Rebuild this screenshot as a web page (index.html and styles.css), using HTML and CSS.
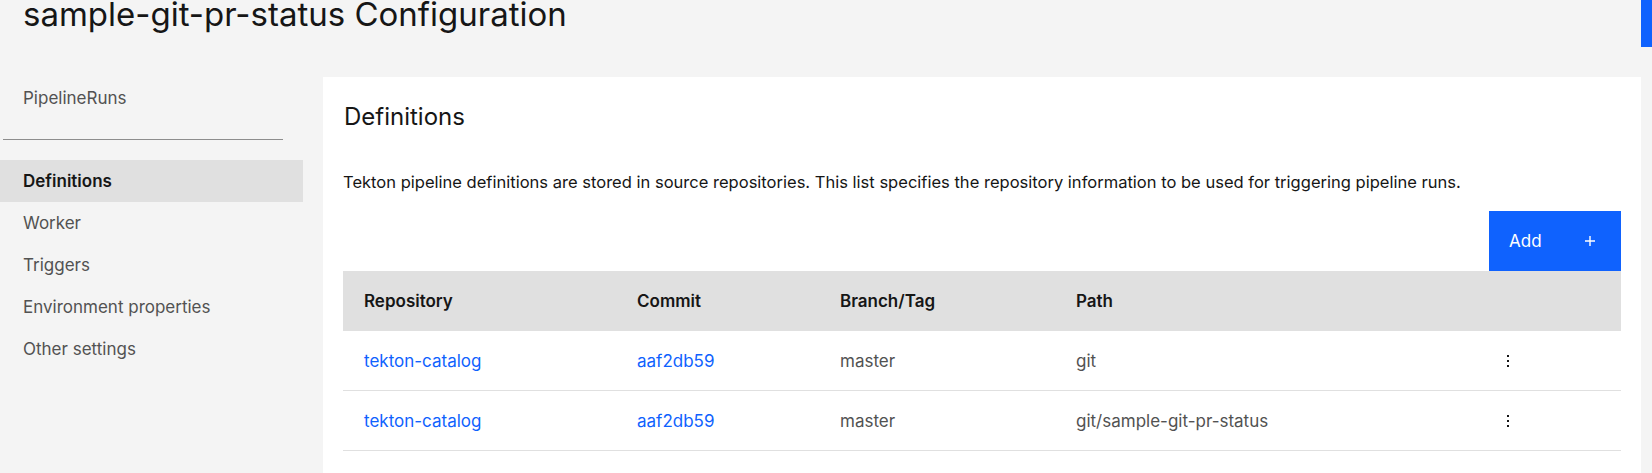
FILE: index.html
```html
<!DOCTYPE html>
<html lang="en">
<head>
<meta charset="utf-8">
<title>sample-git-pr-status Configuration</title>
<link rel="stylesheet" href="styles.css">
</head>
<body>
<div class="app">
  <div class="page">
    <h1 class="title">sample-git-pr-status Configuration</h1>
    <div class="main">
      <nav class="sidenav">
        <div class="nav-top">PipelineRuns</div>
        <hr class="nav-divider">
        <ul class="nav-list">
          <li class="nav-item is-active">Definitions</li>
          <li class="nav-item">Worker</li>
          <li class="nav-item">Triggers</li>
          <li class="nav-item">Environment properties</li>
          <li class="nav-item">Other settings</li>
        </ul>
      </nav>
      <section class="panel">
        <h2 class="panel-title">Definitions</h2>
        <p class="panel-desc">Tekton pipeline definitions are stored in source repositories. This list specifies the repository information to be used for triggering pipeline runs.</p>
        <div class="toolbar">
          <button class="btn-add" type="button"><span>Add</span>
            <svg class="btn-icon" width="16" height="16" viewBox="0 0 16 16" aria-hidden="true"><path d="M8 3v10M3 8h10" stroke="#fff" stroke-width="1.4" fill="none"/></svg>
          </button>
        </div>
        <div class="table">
          <div class="row head">
            <div class="cell">Repository</div>
            <div class="cell">Commit</div>
            <div class="cell">Branch/Tag</div>
            <div class="cell">Path</div>
            <div class="cell"></div>
          </div>
          <div class="row">
            <div class="cell"><a class="link" href="#">tekton-catalog</a></div>
            <div class="cell"><a class="link" href="#">aaf2db59</a></div>
            <div class="cell">master</div>
            <div class="cell">git</div>
            <div class="cell menu-cell"><span class="kebab"><i></i><i></i><i></i></span></div>
          </div>
          <div class="row">
            <div class="cell"><a class="link" href="#">tekton-catalog</a></div>
            <div class="cell"><a class="link" href="#">aaf2db59</a></div>
            <div class="cell">master</div>
            <div class="cell">git/sample-git-pr-status</div>
            <div class="cell menu-cell"><span class="kebab"><i></i><i></i><i></i></span></div>
          </div>
        </div>
      </section>
    </div>
  </div>
  <div class="scrollbar"><div class="thumb"></div></div>
</div>
</body>
</html>
```
FILE: styles.css
```css
html, body {
  margin: 0;
  padding: 0;
  height: 100%;
  overflow: hidden;
}
body {
  background: #f4f4f4;
  font-family: Inter, "Liberation Sans", sans-serif;
  color: #161616;
}
.app {
  display: flex;
  height: 100%;
}
.page {
  flex: 1;
  min-width: 0;
}
.scrollbar {
  width: 11px;
  background: #f4f4f4;
}
.thumb {
  height: 47px;
  background: #0f62fe;
}
.title {
  margin: -2px 0 0 23px;
  font-size: 33px;
  line-height: 32px;
  font-weight: 400;
  color: #161616;
  height: 79px;
}
.main {
  display: flex;
  gap: 20px;
}
.sidenav {
  width: 303px;
  flex: none;
  font-size: 17px;
}
.nav-top {
  height: 42px;
  line-height: 42px;
  padding-left: 23px;
  color: #525252;
}
.nav-divider {
  margin: 20px 0 20px 3px;
  width: 280px;
  border: 0;
  border-top: 1px solid #8d8d8d;
  height: 0;
}
.nav-list {
  list-style: none;
  margin: 0;
  padding: 0;
}
.nav-item {
  height: 42px;
  line-height: 42px;
  padding-left: 23px;
  color: #525252;
}
.nav-item.is-active {
  background: #e0e0e0;
  color: #161616;
  font-weight: 600;
}
.panel {
  flex: 1;
  background: #fff;
  padding: 22px 20px 40px 20px;
  min-height: 500px;
}
.panel-title {
  margin: 0;
  font-size: 24px;
  line-height: 36px;
  font-weight: 400;
  padding-left: 1px;
}
.panel-desc {
  margin: 35px 0 0 0;
  font-size: 16.55px;
  line-height: 24px;
}
.toolbar {
  display: flex;
  justify-content: flex-end;
  margin-top: 17px;
}
.btn-add {
  display: flex;
  align-items: center;
  justify-content: space-between;
  width: 132px;
  height: 60px;
  border: 0;
  margin: 0;
  padding: 0 23px 0 20px;
  background: #0f62fe;
  color: #fff;
  font-family: inherit;
  font-size: 17px;
}
.btn-icon {
  display: block;
}
.table {
  font-size: 17px;
}
.row {
  display: grid;
  grid-template-columns: 273px 203px 236px 1fr 150px;
  height: 60px;
  align-items: center;
  border-bottom: 1px solid #e0e0e0;
  color: #525252;
  box-sizing: border-box;
}
.row.head {
  background: #e0e0e0;
  color: #161616;
  font-weight: 600;
  border-bottom: 0;
}
.cell {
  padding-left: 21px;
}
.link {
  color: #0f62fe;
  text-decoration: none;
}
.menu-cell {
  display: flex;
}
.kebab {
  width: 32px;
  display: flex;
  flex-direction: column;
  align-items: center;
  gap: 3px;
}
.kebab i {
  display: block;
  width: 2px;
  height: 2px;
  background: #161616;
}
```
